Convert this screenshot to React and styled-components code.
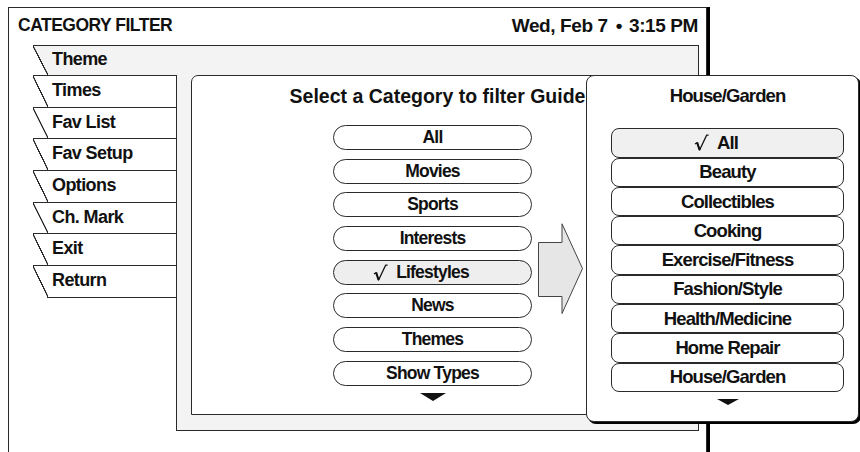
import React from 'react';
import styled, { createGlobalStyle } from 'styled-components';

const GlobalStyle = createGlobalStyle`
  html, body {
    margin: 0;
    padding: 0;
    overflow: hidden;
    background: #fff;
  }
  body {
    font-family: "Liberation Sans", Arial, sans-serif;
    font-weight: 700;
    color: #111;
  }
`

const LINE = '#2a2a2a';
const PANEL = '#f3f3f3';

const Frame = styled.div`
  position: relative;
  box-sizing: border-box;
  margin: 7px 0 0 8px;
  width: 699px;
  height: 446px;
  border: 1px solid ${LINE};
  border-bottom: none;
  box-shadow: 3px 0 0 #000;
  background: #fff;
`

const Header = styled.div`
  display: flex;
  justify-content: space-between;
  height: 37px;
  line-height: 35px;
  padding: 0 8px 0 9px;
`

const Heading = styled.h1`
  margin: 0;
  font-size: 17.5px;
  letter-spacing: -0.5px;
`

const Clock = styled.div`
  font-size: 19px;
  letter-spacing: -0.4px;
  white-space: nowrap;
`

const Bullet = styled.span`
  margin: 0 7px 0 8px;
`

const Folder = styled.div`
  margin-left: 24px;
  width: 666px;
`

const slant = (fill) => `
  content: '';
  position: absolute;
  left: 0;
  top: 0;
  bottom: 0;
  width: 15px;
  background: linear-gradient(to top right, #fff calc(50% - 0.8px), ${LINE} calc(50% - 0.5px), ${LINE} calc(50% + 0.5px), ${fill} calc(50% + 0.8px));
`

const ThemeRow = styled.div`
  position: relative;
  box-sizing: border-box;
  height: 30px;
  border-top: 1px solid ${LINE};
  border-right: 1px solid ${LINE};
  background: ${PANEL};
  padding-left: 19px;
  line-height: 26px;
  font-size: 18px;
  letter-spacing: -0.6px;

  &::before { ${slant(PANEL)} }
  span { position: relative; }
`

const FolderBody = styled.div`
  display: flex;
`

const TabColumn = styled.div`
  width: 143px;
  display: flex;
  flex-direction: column;
`

const Tab = styled.div`
  position: relative;
  box-sizing: border-box;
  height: 31.7px;
  border-top: 1px solid ${LINE};
  padding-left: 19px;
  line-height: 29px;
  font-size: 18px;
  letter-spacing: -0.6px;

  &::before { ${slant('#fff')} }

  ${p => p.$last && `
    &::after {
      content: '';
      position: absolute;
      left: 14px;
      right: 0;
      bottom: -1px;
      height: 1px;
      background: ${LINE};
    }
  `}
`

const Panel = styled.div`
  flex: 1;
  box-sizing: border-box;
  height: 356px;
  background: ${PANEL};
  border: 1px solid ${LINE};
  border-top: none;
  padding: 0 14px 15px 14px;
`

const Content = styled.div`
  box-sizing: border-box;
  height: 100%;
  background: #fff;
  border: 1px solid ${LINE};
  border-radius: 7px 7px 0 0;
  display: flex;
  flex-direction: column;
  align-items: center;
`

const Title = styled.div`
  margin-top: 10px;
  font-size: 19.5px;
  line-height: 20px;
  white-space: nowrap;
`

const CategoryRow = styled.div`
  align-self: stretch;
  display: flex;
  align-items: flex-start;
  gap: 6px;
  padding-left: 141px;
  margin-top: 19px;
`

const PillColumn = styled.div`
  width: 199px;
  display: flex;
  flex-direction: column;
  align-items: center;
  gap: 8.7px;
`

const Pill = styled.div`
  box-sizing: border-box;
  width: 100%;
  height: 25px;
  border: 1px solid ${LINE};
  border-radius: 13px;
  background: ${p => (p.$selected ? '#eeeeee' : '#fff')};
  display: flex;
  align-items: center;
  justify-content: center;
  font-size: 17.5px;
  letter-spacing: -0.8px;
  white-space: nowrap;
`

const MoreDown = styled.div`
  width: 0;
  height: 0;
  margin-top: ${p => p.$gap}px;
  border-left: ${p => p.$w / 2}px solid transparent;
  border-right: ${p => p.$w / 2}px solid transparent;
  border-top: ${p => p.$h}px solid #111;
`

const ArrowWrap = styled.div`
  margin-top: 98px;
  display: flex;
`

const CheckWrap = styled.span`
  display: inline-flex;
  margin-left: -23px;
  margin-right: 8px;
`

const Popup = styled.div`
  position: absolute;
  left: 577px;
  top: 67px;
  box-sizing: border-box;
  width: 273px;
  height: 347px;
  border: 1px solid ${LINE};
  border-radius: 8px;
  box-shadow: 2px 2px 0 #000;
  background: #fff;
  padding: 0 14px 0 24px;
  display: flex;
  flex-direction: column;
  align-items: center;
`

const PopupTitle = styled.div`
  margin-top: 9.5px;
  font-size: 18.5px;
  line-height: 20px;
  letter-spacing: -0.9px;
`

const PopupList = styled.div`
  align-self: stretch;
  margin-top: 22.8px;
  display: flex;
  flex-direction: column;
`

const PopupPill = styled.div`
  box-sizing: border-box;
  height: 29.3px;
  border: 1px solid ${LINE};
  border-radius: 8px;
  background: ${p => (p.$selected ? '#f0f0f0' : '#fff')};
  display: flex;
  align-items: center;
  justify-content: center;
  font-size: 18.5px;
  letter-spacing: -0.9px;
  white-space: nowrap;
`

const Check = () => (
  <CheckWrap>
    <svg width="15" height="17" viewBox="0 0 15 17">
      <path d="M1 10 L3.2 8.6 L5.6 16 L12.6 1.2 L14.6 1.2" fill="none" stroke="#111" strokeWidth="1.3" strokeLinejoin="round" />
      <path d="M3.2 8.6 L5.6 16" stroke="#111" strokeWidth="2" />
    </svg>
  </CheckWrap>
);

const BigArrow = () => (
  <ArrowWrap>
    <svg width="46" height="92" viewBox="0 0 46 92">
      <path d="M0.5 19.5 H24 V0.8 L44.5 45.5 L24 90.5 V73.5 H0.5 Z" fill="#e6e6e6" stroke="#444" strokeWidth="1" />
    </svg>
  </ArrowWrap>
);

const TABS = ['Times', 'Fav List', 'Fav Setup', 'Options', 'Ch. Mark', 'Exit', 'Return'];
const CATEGORIES = ['All', 'Movies', 'Sports', 'Interests', 'Lifestyles', 'News', 'Themes', 'Show Types'];
const SUBCATEGORIES = ['All', 'Beauty', 'Collectibles', 'Cooking', 'Exercise/Fitness', 'Fashion/Style', 'Health/Medicine', 'Home Repair', 'House/Garden'];

export default function App() {
  const selected = 'Lifestyles';
  const selectedSub = 'All';

  return (
    <>
      <GlobalStyle />
      <Frame>
        <Header>
          <Heading>CATEGORY FILTER</Heading>
          <Clock>Wed, Feb 7<Bullet>•</Bullet>3:15 PM</Clock>
        </Header>
        <Folder>
          <ThemeRow><span>Theme</span></ThemeRow>
          <FolderBody>
            <TabColumn>
              {TABS.map((t, i) => (
                <Tab key={t} $last={i === TABS.length - 1}>{t}</Tab>
              ))}
            </TabColumn>
            <Panel>
              <Content>
                <Title>Select a Category to filter Guide</Title>
                <CategoryRow>
                  <PillColumn>
                    {CATEGORIES.map(c => (
                      <Pill key={c} $selected={c === selected}>
                        {c === selected && <Check />}
                        {c}
                      </Pill>
                    ))}
                    <MoreDown $w={26} $h={8} $gap={-2} />
                  </PillColumn>
                  <BigArrow />
                </CategoryRow>
              </Content>
            </Panel>
          </FolderBody>
        </Folder>

        <Popup>
          <PopupTitle>House/Garden</PopupTitle>
          <PopupList>
            {SUBCATEGORIES.map(c => (
              <PopupPill key={c} $selected={c === selectedSub}>
                {c === selectedSub && <Check />}
                {c}
              </PopupPill>
            ))}
          </PopupList>
          <MoreDown $w={22} $h={6} $gap={7} />
        </Popup>
      </Frame>
    </>
  );
}
